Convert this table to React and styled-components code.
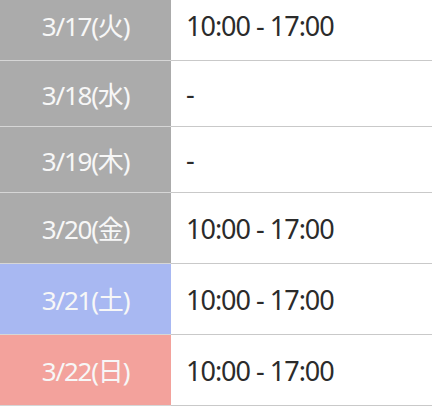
import React from 'react';
import styled, { createGlobalStyle } from 'styled-components';

const GlobalStyle = createGlobalStyle`
  html, body {
    margin: 0;
    padding: 0;
    background: #ffffff;
    overflow: hidden;
  }
`

const Schedule = styled.div`
  display: flex;
  flex-direction: column;
  width: 432px;
  margin-top: -10px;
  font-family: "Noto Sans", "Noto Sans CJK JP", sans-serif;
`

const Row = styled.div`
  display: grid;
  grid-template-columns: 171px 1fr;
  height: ${props => (props.tall ? '71px' : '66px')};
`

const colors = {
  weekday: '#ababab',
  sat: '#a8b8f2',
  sun: '#f3a29c'
}

const DayCell = styled.div`
  display: flex;
  align-items: center;
  justify-content: center;
  background-color: ${props => colors[props.kind]};
  border-bottom: 1px solid #d6d6d6;
  color: #f7f7f7;
  font-size: 26px;
  letter-spacing: -1.2px;
`

const HoursCell = styled.div`
  display: flex;
  align-items: center;
  padding-left: 15px;
  border-bottom: 1px solid #c9c9c9;
  color: #2b2b2b;
  font-size: 27px;
  letter-spacing: -1px;
`

const days = [
  { date: '3/17(火)', hours: '10:00 - 17:00', kind: 'weekday' },
  { date: '3/18(水)', hours: '-', kind: 'weekday' },
  { date: '3/19(木)', hours: '-', kind: 'weekday' },
  { date: '3/20(金)', hours: '10:00 - 17:00', kind: 'weekday' },
  { date: '3/21(土)', hours: '10:00 - 17:00', kind: 'sat' },
  { date: '3/22(日)', hours: '10:00 - 17:00', kind: 'sun' }
]

export default function App() {
  return (
    <>
      <GlobalStyle />
      <Schedule>
        {days.map(day => (
          <Row key={day.date} tall={day.hours !== '-'}>
            <DayCell kind={day.kind}>{day.date}</DayCell>
            <HoursCell>{day.hours}</HoursCell>
          </Row>
        ))}
      </Schedule>
    </>
  );
}
